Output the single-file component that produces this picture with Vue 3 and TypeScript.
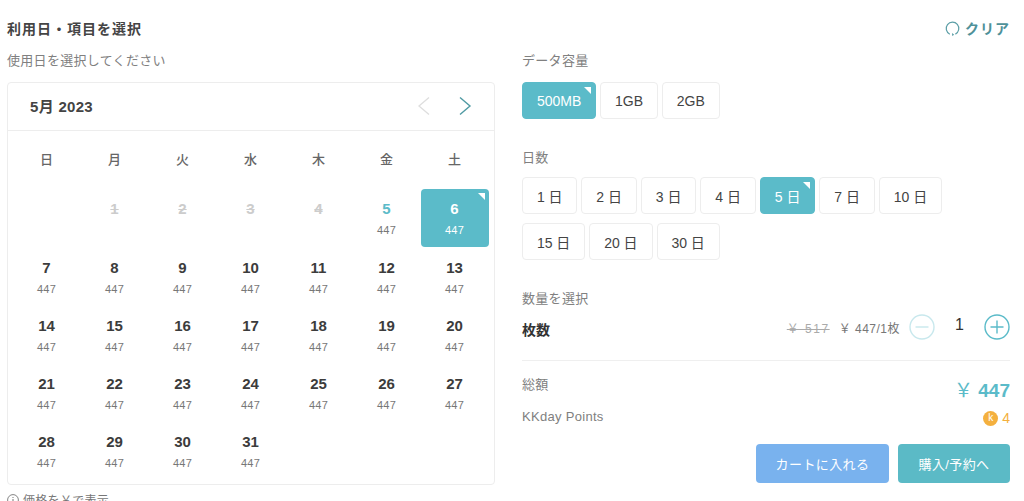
<template>
  <div class="page">
    <div class="top">
      <h2 class="title">利用日・項目を選択</h2>
      <a class="clear">
        <svg class="clear-icon" width="15" height="15" viewBox="0 0 15 15">
          <path d="M4.8 13.2 A6.3 6.3 0 1 1 10.4 13.1" fill="none" stroke="#5b9ea6" stroke-width="1.2" />
          <path d="M7 12 L9.2 13.8 L7.2 15 Z" fill="#5b9ea6" />
        </svg>
        クリア
      </a>
    </div>

    <div class="columns">
      <!-- 左: カレンダー -->
      <section class="left">
        <div class="label">使用日を選択してください</div>
        <div class="calendar">
          <div class="cal-head">
            <span class="month">5月 2023</span>
            <div class="arrows">
              <svg width="14" height="20" viewBox="0 0 14 20">
                <path d="M12 1.5 L2 10 L12 18.5" fill="none" stroke="#dedede" stroke-width="1.3" />
              </svg>
              <svg width="14" height="20" viewBox="0 0 14 20">
                <path d="M2 1.5 L12 10 L2 18.5" fill="none" stroke="#4f9aa3" stroke-width="1.4" />
              </svg>
            </div>
          </div>
          <div class="grid">
            <div v-for="w in weekdays" :key="w" class="weekday">{{ w }}</div>
            <div
              v-for="(cell, i) in cells"
              :key="i"
              class="cell"
              :class="{ off: cell.off, today: cell.day === 5, picked: cell.day === 6 }"
            >
              <template v-if="cell.day">
                <span class="day">{{ cell.day }}</span>
                <span v-if="!cell.off" class="price">447</span>
              </template>
            </div>
          </div>
        </div>
        <div class="note">
          <svg width="12" height="12" viewBox="0 0 12 12">
            <circle cx="6" cy="6" r="5.4" fill="none" stroke="#777" stroke-width="0.9" />
            <path d="M6 5 V9 M6 3 V4" stroke="#777" stroke-width="1" />
          </svg>
          価格を￥で表示
        </div>
      </section>

      <!-- 右: オプション -->
      <section class="right">
        <div class="label">データ容量</div>
        <div class="options">
          <button v-for="o in sizes" :key="o" class="opt" :class="{ active: o === '500MB' }">{{ o }}</button>
        </div>

        <div class="label days-label">日数</div>
        <div class="options days">
          <button v-for="d in days" :key="d" class="opt" :class="{ active: d === 5 }">{{ d }} 日</button>
        </div>

        <div class="label qty-label">数量を選択</div>
        <div class="qty">
          <span class="qty-name">枚数</span>
          <span class="old">￥ 517</span>
          <span class="unit">￥ 447/1枚</span>
          <svg class="minus" width="26" height="26" viewBox="0 0 26 26">
            <circle cx="13" cy="13" r="12" fill="none" stroke="#c8e8ed" stroke-width="1.4" />
            <path d="M6.5 13 H19.5" stroke="#c8e8ed" stroke-width="1.4" />
          </svg>
          <span class="count">1</span>
          <svg width="26" height="26" viewBox="0 0 26 26">
            <circle cx="13" cy="13" r="12" fill="none" stroke="#5bbbc9" stroke-width="1.4" />
            <path d="M6.5 13 H19.5 M13 6.5 V19.5" stroke="#5bbbc9" stroke-width="1.4" />
          </svg>
        </div>

        <div class="total-row">
          <span class="label">総額</span>
          <span class="total"><span class="yen">￥</span> 447</span>
        </div>
        <div class="points-row">
          <span class="label">KKday Points</span>
          <span class="points"><i class="coin">k</i>4</span>
        </div>

        <div class="actions">
          <button class="btn cart">カートに入れる</button>
          <button class="btn buy">購入/予約へ</button>
        </div>
      </section>
    </div>
  </div>
</template>

<script setup lang="ts">
interface Cell {
  day: number | null;
  off: boolean;
}

const weekdays = ['日', '月', '火', '水', '木', '金', '土'];
const sizes = ['500MB', '1GB', '2GB'];
const days = [1, 2, 3, 4, 5, 7, 10, 15, 20, 30];

const cells: Cell[] = [
  { day: null, off: true },
  ...Array.from({ length: 31 }, (_, i) => ({ day: i + 1, off: i < 4 })),
];
</script>

<style>
html,
body {
  margin: 0;
  background: #fff;
  height: 501px;
  overflow: hidden;
}
</style>

<style scoped>
.page {
  box-sizing: border-box;
  width: 1024px;
  height: 501px;
  overflow: hidden;
  padding: 19px 14px 0 7px;
  font-family: 'Liberation Sans', 'Noto Sans CJK JP', sans-serif;
  color: #333;
}

.top {
  display: flex;
  justify-content: space-between;
  align-items: center;
  height: 18px;
  margin-bottom: 15px;
}

.title {
  margin: 0;
  font-size: 14px;
  font-weight: 700;
  letter-spacing: 1px;
  color: #444;
}

.clear {
  display: flex;
  align-items: center;
  gap: 5px;
  font-size: 14px;
  font-weight: 700;
  letter-spacing: 1px;
  color: #4f9199;
}

.columns {
  display: flex;
  justify-content: space-between;
}

.left,
.right {
  width: 488px;
}

.label {
  font-size: 13px;
  line-height: 18px;
  letter-spacing: 0.3px;
  color: #808080;
}

.calendar {
  box-sizing: border-box;
  margin-top: 12px;
  height: 403px;
  border: 1px solid #ededed;
  border-radius: 4px;
}

.cal-head {
  box-sizing: border-box;
  display: flex;
  justify-content: space-between;
  align-items: center;
  height: 48px;
  padding: 0 22px 2px;
  border-bottom: 1px solid #ededed;
}

.month {
  font-size: 15px;
  font-weight: 700;
  letter-spacing: 0.3px;
  color: #444;
}

.arrows {
  display: flex;
  gap: 27px;
}

.grid {
  display: grid;
  grid-template-columns: repeat(7, 68px);
  grid-auto-rows: 58.25px;
  padding-left: 4.5px;
}

.weekday {
  box-sizing: border-box;
  display: flex;
  align-items: center;
  justify-content: center;
  height: 58px;
  padding-bottom: 4px;
  font-size: 13px;
  font-weight: 500;
  color: #666;
}

.cell {
  position: relative;
  display: flex;
  flex-direction: column;
  align-items: center;
  padding-top: 11px;
  box-sizing: border-box;
  height: 58px;
  border-radius: 4px;
}

.day {
  font-size: 15px;
  font-weight: 700;
  line-height: 18px;
  color: #3c3c3c;
}

.price {
  margin-top: 5px;
  font-size: 11px;
  line-height: 14px;
  letter-spacing: 0.2px;
  color: #777;
}

.off .day {
  color: #ccc;
  text-decoration: line-through;
}

.today .day {
  color: #5bbbc9;
}

.picked {
  background: #5bbbc9;
}

.picked .day,
.picked .price {
  color: #fff;
}

.picked::after,
.active::after {
  content: '';
  position: absolute;
  top: 4px;
  right: 4px;
  border-top: 7px solid #fff;
  border-left: 7px solid transparent;
}

.note {
  display: flex;
  align-items: center;
  gap: 4px;
  margin-top: 6px;
  font-size: 12px;
  letter-spacing: 0.3px;
  color: #777;
}

.options {
  display: flex;
  flex-wrap: wrap;
  gap: 9px 4px;
  margin-top: 12px;
}

.days {
  width: 430px;
  margin-top: 10px;
}

.opt {
  position: relative;
  box-sizing: border-box;
  height: 37px;
  padding: 0 13.9px;
  border: 1px solid #ededed;
  border-radius: 4px;
  background: #fff;
  font: inherit;
  font-size: 14px;
  color: #444;
}

.opt.active {
  border-color: #5bbbc9;
  background: #5bbbc9;
  color: #fff;
}

.days-label {
  margin-top: 30px;
}

.qty-label {
  margin-top: 30px;
}

.qty {
  display: flex;
  align-items: center;
  height: 26px;
  margin-top: 6px;
  padding-bottom: 20px;
  border-bottom: 1px solid #efefef;
}

.qty-name {
  margin-top: 3px;
  margin-right: auto;
  font-size: 14px;
  font-weight: 700;
  color: #333;
}

.old {
  font-size: 12px;
  letter-spacing: 1.5px;
  color: #aaa;
  text-decoration: line-through;
}

.unit {
  margin-left: 9px;
  font-size: 12px;
  letter-spacing: 0.5px;
  color: #777;
}

.minus {
  margin-left: 9px;
}

.count {
  width: 49px;
  margin-bottom: 4px;
  text-align: center;
  font-size: 16px;
  color: #333;
}

.total-row,
.points-row {
  display: flex;
  justify-content: space-between;
  align-items: flex-start;
}

.total-row {
  margin-top: 15px;
  height: 32px;
}

.total {
  font-size: 19px;
  font-weight: 700;
  line-height: 30px;
  color: #5bbbc9;
}

.yen {
  font-weight: 400;
}

.points-row {
  height: 18px;
}

.points {
  display: flex;
  align-items: center;
  gap: 4px;
  margin-top: 1px;
  font-size: 14px;
  line-height: 18px;
  color: #f4b03e;
}

.coin {
  display: flex;
  align-items: center;
  justify-content: center;
  width: 15px;
  height: 15px;
  border-radius: 50%;
  background: #f4b03e;
  color: #fff;
  font-size: 10px;
  font-style: normal;
}

.actions {
  display: flex;
  justify-content: flex-end;
  gap: 9px;
  margin-top: 18px;
}

.btn {
  height: 39px;
  border: 0;
  border-radius: 4px;
  font: inherit;
  font-size: 13px;
  letter-spacing: 0.4px;
  color: #fff;
}

.cart {
  width: 133px;
  background: #79b2ee;
}

.buy {
  width: 112px;
  background: #5bbac6;
}
</style>
